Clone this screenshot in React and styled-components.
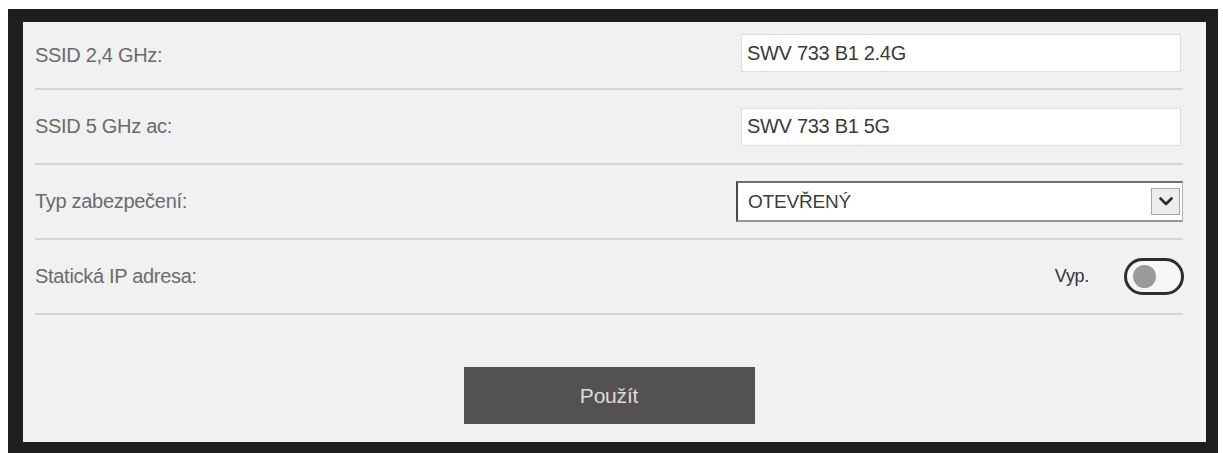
import React from "react";
import styled, { createGlobalStyle } from "styled-components";

const Global = createGlobalStyle`
  html, body { margin: 0; padding: 0; background: #ffffff; }
  body { font-family: "Liberation Sans", Arial, sans-serif; }
  * { box-sizing: border-box; }
`;

const Frame = styled.div`
  margin: 9px 0 0 8px;
  width: 1210px;
  border-style: solid;
  border-color: #1f1d1e;
  border-width: 13px 12px 12px 15px;
  background: #f1f1f1;
`;

const Panel = styled.div`
  display: flex;
  flex-direction: column;
  padding: 0 23px 18px 12px;
  height: 420px;
`;

const Row = styled.div`
  display: flex;
  align-items: center;
  justify-content: space-between;
  height: ${(p) => (p.$first ? "68px" : "75px")};
  border-bottom: 2px solid #d4d4d4;
`;

const Label = styled.span`
  font-size: 20px;
  color: #6b6b6b;
  letter-spacing: -0.3px;
`;

const TextField = styled.input`
  width: 440px;
  height: 38px;
  margin-right: 2px;
  margin-top: ${(p) => p.$shift || 0}px;
  padding: 0 5px;
  border: 1px solid #dedede;
  background: #ffffff;
  font-family: inherit;
  font-size: 20px;
  color: #3a3a3a;
  letter-spacing: -0.3px;
  outline: none;
`;

const SelectBox = styled.div`
  width: 447px;
  height: 41px;
  display: flex;
  align-items: center;
  justify-content: space-between;
  padding: 0 2px 0 10px;
  background: #ffffff;
  border-top: 2px solid #6e6e6e;
  border-left: 2px solid #4a4a4a;
  border-right: 1px solid #b5b5b5;
  border-bottom: 2px solid #959595;
`;

const SelectText = styled.span`
  font-size: 19px;
  color: #3d3d3d;
  letter-spacing: -0.2px;
`;

const ArrowBox = styled.span`
  width: 29px;
  height: 27px;
  display: flex;
  align-items: center;
  justify-content: center;
  background: #ececec;
  border: 1px solid #a8a8a8;
`;

const SwitchGroup = styled.div`
  display: flex;
  align-items: center;
  gap: 35px;
  margin-right: -1px;
`;

const SwitchText = styled.span`
  font-size: 18px;
  color: #333333;
  letter-spacing: -0.3px;
`;

const Track = styled.span`
  width: 60px;
  height: 37px;
  display: flex;
  align-items: center;
  padding-left: 6px;
  border: 3px solid #2e2e2e;
  border-radius: 19px;
  background: #f6f6f6;
`;

const Knob = styled.span`
  width: 23px;
  height: 23px;
  border-radius: 50%;
  background: #9a9a9a;
`;

const Actions = styled.div`
  display: flex;
  justify-content: center;
  margin-top: 52px;
`;

const ApplyButton = styled.button`
  width: 291px;
  height: 57px;
  border: none;
  background: #545152;
  color: #dcdcdc;
  font-family: inherit;
  font-size: 21px;
  letter-spacing: -0.2px;
`;

export default function App() {
  return (
    <>
      <Global />
      <Frame>
        <Panel>
          <Row $first>
            <Label>SSID 2,4 GHz:</Label>
            <TextField readOnly value="SWV 733 B1 2.4G" $shift={-4} />
          </Row>
          <Row>
            <Label>SSID 5 GHz ac:</Label>
            <TextField readOnly value="SWV 733 B1 5G" />
          </Row>
          <Row>
            <Label>Typ zabezpečení:</Label>
            <SelectBox>
              <SelectText>OTEVŘENÝ</SelectText>
              <ArrowBox>
                <svg width="14" height="9" viewBox="0 0 14 9">
                  <path d="M1.5 1.5 L7 7 L12.5 1.5" fill="none" stroke="#2a2a2a" strokeWidth="2.6" strokeLinecap="round" strokeLinejoin="round" />
                </svg>
              </ArrowBox>
            </SelectBox>
          </Row>
          <Row>
            <Label>Statická IP adresa:</Label>
            <SwitchGroup>
              <SwitchText>Vyp.</SwitchText>
              <Track>
                <Knob />
              </Track>
            </SwitchGroup>
          </Row>
          <Actions>
            <ApplyButton>Použít</ApplyButton>
          </Actions>
        </Panel>
      </Frame>
    </>
  );
}
